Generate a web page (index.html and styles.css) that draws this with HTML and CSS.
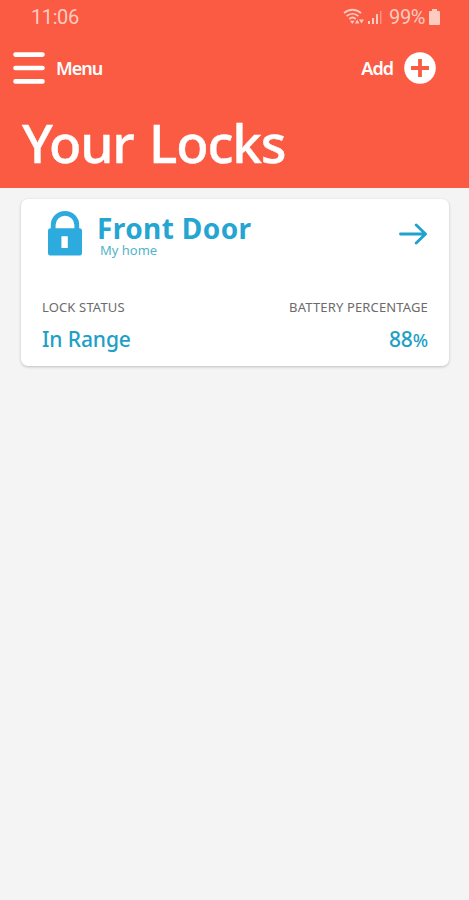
FILE: index.html
```html
<!DOCTYPE html>
<html lang="en">
<head>
    <meta charset="UTF-8">
    <meta name="viewport" content="width=device-width, initial-scale=1.0">
    <title>Your Locks</title>
    <link rel="stylesheet" href="styles.css">
</head>
<body>
    <header class="header">
        <div class="status-bar">
            <span class="time">11:06</span>
            <div class="status-icons">
                <svg class="wifi" width="22" height="18" viewBox="0 0 22 18" fill="none" stroke="currentColor" stroke-width="1.8">
                    <path d="M1 5.200C6 .6 13 .6 18 5.200M3.600 8.200c3.600-3.200 8.200-3.200 11.800 0M6.300 11c2-1.800 4.400-1.800 6.400 0"/>
                    <path d="M7 12.800h4.600L9.300 16z" fill="currentColor" stroke="none"/>
                    <path d="M12 15.500l2.200-4 2.200 4zM16 11.500h5l-2.500 4z" fill="currentColor" stroke="none"/>
                </svg>
                <svg class="signal" width="15" height="16" viewBox="0 0 15 16" fill="currentColor">
                    <rect x="0" y="12" width="2" height="3"/>
                    <rect x="4" y="9" width="2" height="6"/>
                    <rect x="8" y="5" width="2" height="10"/>
                    <rect x="12" y="2" width="1.5" height="13" opacity=".5"/>
                </svg>
                <span class="level">99%</span>
                <svg class="battery" width="11" height="16" viewBox="0 0 11 16" fill="currentColor">
                    <path d="M3 0h5v2h2q1 0 1 1v12q0 1-1 1H1q-1 0-1-1V3q0-1 1-1h2z"/>
                </svg>
            </div>
        </div>

        <nav class="nav">
            <div class="nav-item">
                <svg width="32" height="32" viewBox="0 0 32 32" stroke="#fff" stroke-width="4.600" stroke-linecap="round">
                    <path d="M2.500 2.600h27M2.500 16h27M2.500 29.400h27"/>
                </svg>
                <span class="menu-label">Menu</span>
            </div>
            <div class="nav-item">
                <span class="add-label">Add</span>
                <svg width="32" height="32" viewBox="0 0 32 32">
                    <circle cx="16" cy="16" r="15.800" fill="#fff"/>
                    <path d="M16 7v18M7 16h18" stroke="#fb5a43" stroke-width="3.800"/>
                </svg>
            </div>
        </nav>

        <h1 class="title">Your Locks</h1>
    </header>

    <main class="lock-list">
        <div class="lock-card">
            <div class="lock-top">
                <svg class="lock-icon" width="34" height="45" viewBox="0 0 34 45">
                    <path d="M5.200 20v-6a11.800 11.600 0 0 1 23.600 0V20" fill="none" stroke="#2dabdf" stroke-width="4.800"/>
                    <path d="M2.500 17.300h29q2.500 0 2.500 2.500v22.200q0 2.500-2.500 2.500h-29q-2.500 0-2.500-2.500V19.800q0-2.500 2.500-2.500zM13.400 25.300v11.600h6.400V25.300z" fill="#2dabdf" fill-rule="evenodd"/>
                </svg>
                <div class="lock-name">
                    <h2>Front Door</h2>
                    <p>My home</p>
                </div>
                <svg class="arrow" width="28" height="22" viewBox="0 0 28 22" fill="none" stroke="#1fa3cc" stroke-width="2.900" stroke-linecap="round" stroke-linejoin="round">
                    <path d="M1.500 11h25M17.200 2l9.300 9-9.300 9"/>
                </svg>
            </div>
            <div class="lock-info">
                <div class="info">
                    <span class="label">LOCK STATUS</span>
                    <span class="value">In Range</span>
                </div>
                <div class="info info-right">
                    <span class="label">BATTERY PERCENTAGE</span>
                    <span class="value">88<span class="percent">%</span></span>
                </div>
            </div>
        </div>
    </main>
</body>
</html>
```
FILE: styles.css
```css
* {
    box-sizing: border-box;
}

body {
    margin: 0;
    min-height: 100vh;
    background-color: #f4f4f4;
    font-family: "Noto Sans", sans-serif;
}

h1, h2, p {
    margin: 0;
}

svg {
    display: block;
    flex-shrink: 0;
}

.header {
    height: 188px;
    background-color: #fb5a43;
    color: #fff;
}

.status-bar {
    display: flex;
    justify-content: space-between;
    align-items: center;
    height: 34px;
    padding: 0 29px 0 31px;
    font-family: Roboto, sans-serif;
    font-size: 20px;
    color: #fecbc0;
}

.time {
    letter-spacing: -0.4px;
}

.status-icons {
    display: flex;
    align-items: center;
}

.signal {
    margin-left: 3px;
}

.level {
    margin-left: 6px;
    letter-spacing: -0.4px;
}

.battery {
    margin-left: 4px;
}

.nav {
    display: flex;
    justify-content: space-between;
    align-items: center;
    height: 68px;
    padding: 0 33px 0 13px;
    font-size: 18px;
    font-weight: 600;
    letter-spacing: -1px;
}

.nav-item {
    display: flex;
    align-items: center;
    gap: 11px;
}

.title {
    padding-left: 22px;
    font-size: 53px;
    font-weight: 500;
    line-height: 82px;
    letter-spacing: -1.2px;
    word-spacing: 3px;
    -webkit-text-stroke: 0.4px #fff;
}

.lock-list {
    padding: 11px 20px 0 21px;
}

.lock-card {
    height: 167px;
    padding: 12px 21px 0;
    background-color: #fff;
    border-radius: 7px;
    box-shadow: 0 1px 3px rgba(0, 0, 0, 0.22);
}

.lock-top {
    display: flex;
    align-items: center;
    height: 45px;
    padding-left: 6px;
    color: #24a5d2;
}

.lock-name {
    flex: 1;
    margin-left: 15px;
}

.lock-name h2 {
    font-size: 28px;
    font-weight: 700;
    line-height: 32px;
    letter-spacing: 0.4px;
}

.lock-name p {
    margin-left: 3px;
    font-size: 13px;
    line-height: 12px;
    color: #52b4ca;
}

.arrow {
    margin-right: 1px;
}

.lock-info {
    display: flex;
    justify-content: space-between;
    margin-top: 42px;
}

.info {
    display: flex;
    flex-direction: column;
}

.info-right {
    align-items: flex-end;
}

.label {
    font-size: 13px;
    line-height: 18px;
    letter-spacing: 0.15px;
    color: #6b6b6b;
}

.value {
    margin-top: 8px;
    font-size: 21px;
    font-weight: 500;
    line-height: 30px;
    letter-spacing: -0.1px;
    color: #219fc6;
}

.percent {
    font-size: 18px;
}
```
